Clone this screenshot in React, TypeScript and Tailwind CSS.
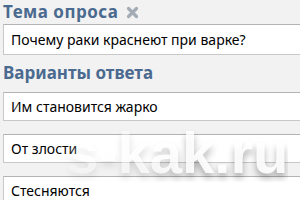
export default function App() {
  const answers = ['Им становится жарко', 'От злости', 'Стесняются']

  return (
    <div className="relative w-[300px] h-[200px] overflow-hidden bg-[#f2f2f2] font-['Noto_Sans',sans-serif]">
      <div className="pl-[3px] pt-[2px]">
        <div className="flex items-center gap-[8px] h-[19px]">
          <span className="text-[17px] font-bold leading-none text-[#4a6a8f] tracking-[0.5px]">Тема опроса</span>
          <svg width="13" height="13" viewBox="0 0 13 13" className="mt-[1px]">
            <path d="M2.5 2.5 L10.5 10.5 M10.5 2.5 L2.5 10.5" stroke="#a3abb5" strokeWidth="3.2" strokeLinecap="round" />
          </svg>
        </div>
        <div className="mt-[3px] h-[31px] w-[320px] bg-white border border-[#c8c8c8] border-t-[#b3b3b3] flex items-center pl-[7px]">
          <span className="text-[14px] text-black">Почему раки краснеют при варке?</span>
        </div>

        <div className="mt-[9px] text-[17px] font-bold leading-none text-[#4a6a8f] h-[18px]">Варианты ответа</div>

        <div className="mt-[10px] flex flex-col gap-[13px]">
          {answers.map((a) => (
            <div key={a} className="h-[29px] w-[320px] bg-white border border-[#c8c8c8] border-t-[#b3b3b3] flex items-center pl-[7px]">
              <span className="text-[14px] text-black">{a}</span>
            </div>
          ))}
        </div>
      </div>

      <div className="absolute left-[66px] top-[124px] whitespace-nowrap font-['Liberation_Sans',sans-serif] text-[58px] font-bold leading-none text-white/90 [text-shadow:0_5px_7px_rgba(0,0,0,0.3)] [mask-image:linear-gradient(90deg,rgba(0,0,0,0.15),rgba(0,0,0,0.5)_35%,#000_60%)] pointer-events-none">
        s-kak.ru
      </div>
    </div>
  )
}
